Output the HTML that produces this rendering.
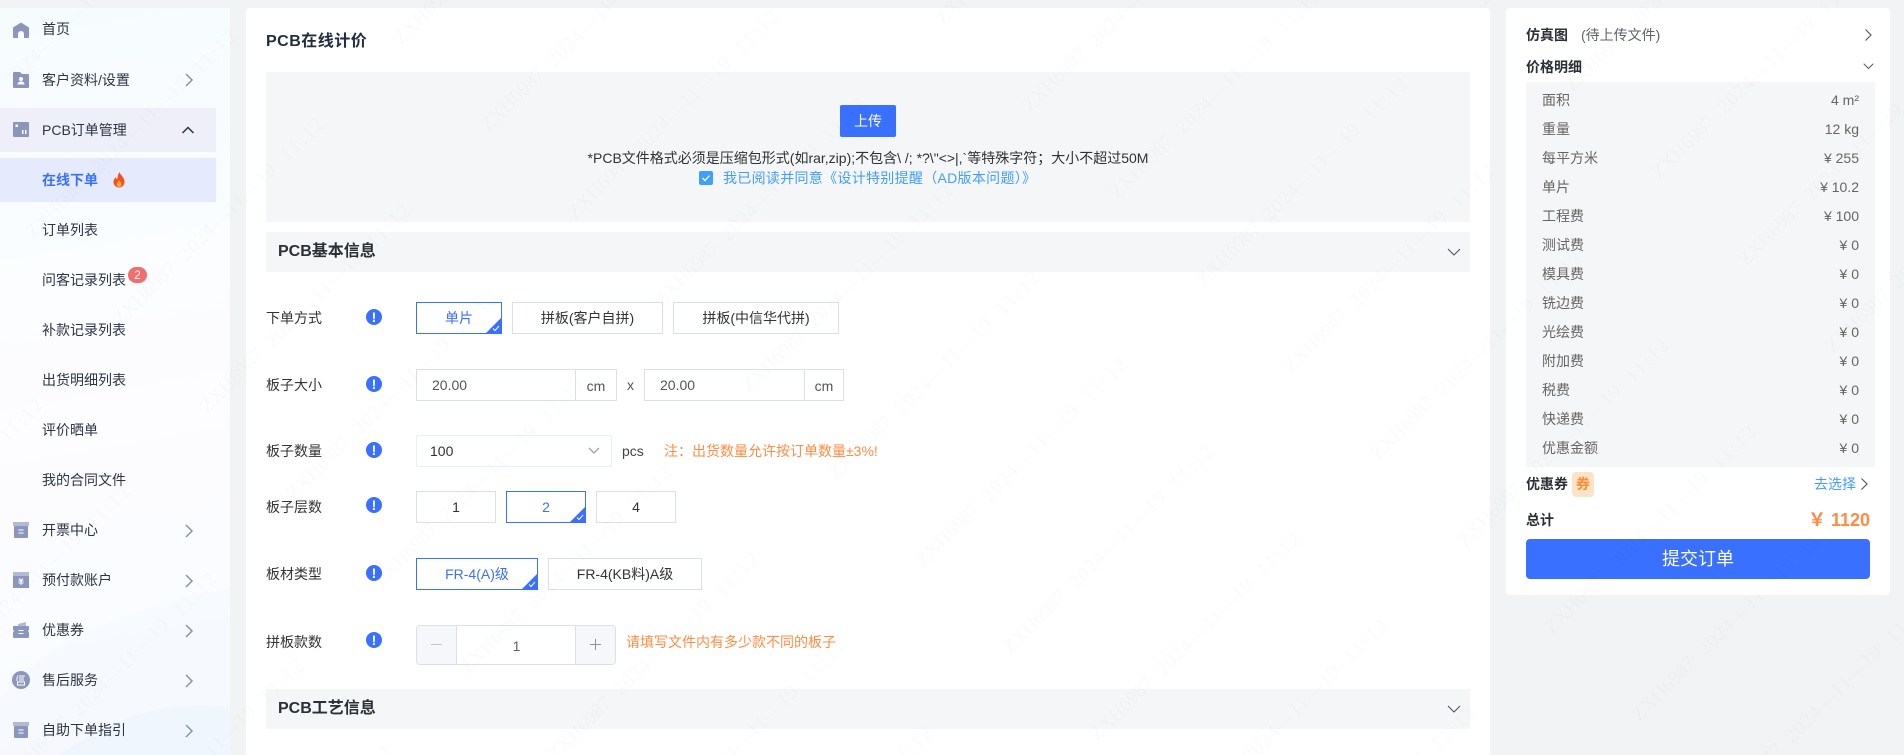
<!DOCTYPE html>
<html lang="zh-CN"><head><meta charset="utf-8"><title>PCB在线计价</title>
<style>
*{box-sizing:border-box;margin:0;padding:0}
html,body{width:1904px;height:755px;overflow:hidden;background:#f2f3f5}
body{position:relative;font-family:"Liberation Sans","Noto Sans CJK SC",sans-serif;font-size:14px;color:#303133}
.a{position:absolute;white-space:nowrap}
#side{position:absolute;left:0;top:8px;width:230px;height:747px;overflow:hidden;background:linear-gradient(170deg,#f6fcfe 0,#fbfdff 35%,#fdfcff 55%,#fafcff 80%,#f7fafe 100%)}
.m{position:absolute;left:42px;height:20px;line-height:20px;font-size:14px;color:#2c3444;white-space:nowrap}
.ic{position:absolute;left:13px;width:16px;height:16px}
.ch{position:absolute;left:183px;width:12px;height:14px}
.panel{position:absolute;background:#fff;border-radius:4px}
.sec{position:absolute;left:266px;width:1204px;height:40px;background:#f5f6f8;font-weight:700;font-size:16px;line-height:40px;padding-left:12px;color:#2b2f36}
.lb{position:absolute;left:266px;height:20px;line-height:20px;color:#333}
.inf{position:absolute;left:366px;width:16px;height:16px;border-radius:50%;background:#3a70ff;color:#fff;font-size:14px;font-weight:700;line-height:16px;text-align:center}
.op{position:absolute;height:32px;border:1px solid #dcdfe6;background:#fff;line-height:30px;text-align:center;font-size:14px;color:#333;overflow:hidden}
.on{border-color:#3a70ff;color:#3a70ff}
.on:after{content:"";position:absolute;right:0;bottom:0;border-style:solid;border-width:0 0 15px 15px;border-color:transparent transparent #3a70ff transparent}
.on svg{position:absolute;right:1px;bottom:1px;width:8px;height:7px;z-index:1}
.bx{position:absolute;border:1px solid #dcdfe6;background:#fff;line-height:30px;height:32px}
.or{color:#ff8c42;font-size:14px}
.pl{position:absolute;left:1542px;height:20px;line-height:20px;color:#666;font-size:14px}
.pv{position:absolute;right:45px;height:20px;line-height:20px;color:#666;font-size:14px;white-space:nowrap}
.b{font-weight:700;color:#2b2f36}
</style></head><body>

<div id="side">
<div class="a" style="left:0;top:100px;width:216px;height:44px;background:#eeeff9"></div>
<div class="a" style="left:0;top:150px;width:216px;height:44px;background:#e5ebfd"></div>
<svg class="a" style="left:0;top:540px" width="230" height="207" viewBox="0 0 230 207"><path d="M0 150C50 90 130 60 230 40V207H0Z" fill="#f0f5fc" opacity=".25"/><path d="M60 207C110 170 170 150 230 160V207Z" fill="#e9f3fd" opacity=".4"/></svg>
</div>

<!-- sidebar -->
<svg class="ic" style="top:22px" viewBox="0 0 16 16"><path d="M0 5.500 8 .5l8 5V15a1 1 0 0 1-1 1H1a1 1 0 0 1-1-1Z" fill="#8c96bd"/><path d="M5 16v-4a3 3 0 0 1 6 0v4Z" fill="#fff"/></svg>
<div class="m" style="top:19px">首页</div>
<svg class="ic" style="top:72px" viewBox="0 0 16 16"><path d="M0 1a1 1 0 0 1 1-1h6l2 2h6a1 1 0 0 1 1 1v12a1 1 0 0 1-1 1H1a1 1 0 0 1-1-1Z" fill="#8c96bd"/><circle cx="8" cy="7" r="2" fill="#fff"/><path d="M4.500 12.500c0-2 1.500-3 3.500-3s3.500 1 3.500 3Z" fill="#fff"/></svg>
<div class="m" style="top:70px">客户资料/设置</div>
<svg class="ic" style="top:122px" viewBox="0 0 16 16"><rect width="16" height="15" rx="1" fill="#8c96bd"/><rect x="2.500" y="2.500" width="2.500" height="2.500" fill="#fff"/><rect x="9" y="8" width="1.500" height="4" fill="#fff"/><rect x="12" y="8" width="1.500" height="4" fill="#fff"/></svg>
<div class="m" style="top:120px">PCB订单管理</div>
<div class="m" style="top:170px;color:#3a70ff;font-weight:700">在线下单</div>
<svg class="a" style="left:113px;top:172px" width="12" height="16" viewBox="0 0 12 16"><path d="M6.500 0C7 3 11.500 5 11.500 10A5.500 5.500 0 0 1 .5 10C.5 7.500 2 6.300 2.800 5c.2 1.300.8 2 1.500 2.300C4.500 4.500 5 2 6.500 0Z" fill="#f4511e"/><path d="M6 8c.4 1.500 2.500 2 2.500 4.200A2.500 2.500 0 0 1 3.500 12.500C3.500 11 5.500 10 6 8Z" fill="#ffab40"/></svg>
<div class="m" style="top:220px">订单列表</div>
<div class="m" style="top:270px">问客记录列表</div>
<div class="a" style="left:128px;top:267px;width:19px;height:16px;border-radius:9px;background:#f56c6c;color:#fff;font-size:12px;line-height:16px;text-align:center">2</div>
<div class="m" style="top:320px">补款记录列表</div>
<div class="m" style="top:370px">出货明细列表</div>
<div class="m" style="top:420px">评价晒单</div>
<div class="m" style="top:470px">我的合同文件</div>
<svg class="ic" style="top:522px" viewBox="0 0 16 16"><rect x="0" y="0" width="16" height="4" fill="#b3bad3"/><rect x="1" y="4" width="14" height="12" rx="1" fill="#8c96bd"/><path d="M5.500 7.500h5v1h-5Zm0 3h5v1h-5Z" fill="#fff"/></svg>
<div class="m" style="top:520px">开票中心</div>
<svg class="ic" style="top:572px" viewBox="0 0 16 16"><rect x="0" y="0" width="16" height="4.500" fill="#b3bad3"/><rect y="4" width="16" height="12" fill="#8c96bd"/><path d="M6 6.500l2 2 2-2M5.500 9h5M5.500 11h5M8 8.500V13" stroke="#fff" fill="none"/></svg>
<div class="m" style="top:570px">预付款账户</div>
<svg class="ic" style="top:622px" viewBox="0 0 16 16"><path d="M5 2 13 0v4H5Z" fill="#b3bad3"/><path d="M1 4h14a1 1 0 0 1 1 1v2.500a2 2 0 0 0 0 3V15a1 1 0 0 1-1 1H1a1 1 0 0 1-1-1v-4.500a2 2 0 0 0 0-3V5a1 1 0 0 1 1-1Z" fill="#8c96bd"/><path d="M5.500 8h5v1h-5Zm0 3h5v1h-5Z" fill="#fff"/></svg>
<div class="m" style="top:620px">优惠券</div>
<svg class="a" style="left:12px;top:671px" width="18" height="18" viewBox="0 0 18 18"><circle cx="9" cy="9" r="9" fill="#8c96bd"/><path d="M6 4.500 5 7v3M7 5h6M7 7h5M7 9h5M5.500 11h7v3h-7Z" stroke="#fff" fill="none"/></svg>
<div class="m" style="top:670px">售后服务</div>
<svg class="ic" style="top:722px" viewBox="0 0 16 16"><rect x="0" y="0" width="16" height="4" fill="#b3bad3"/><rect x="1" y="4" width="14" height="12" rx="1" fill="#8c96bd"/><path d="M5.500 7.500h5v1h-5Zm0 3h5v1h-5Z" fill="#fff"/></svg>
<div class="m" style="top:720px">自助下单指引</div>
<svg class="ch" style="top:73px" viewBox="0 0 12 14"><path d="M3 1l6 6-6 6" fill="none" stroke="#8a93a8" stroke-width="1.500"/></svg>
<svg class="a" style="left:181px;top:124px" width="14" height="12" viewBox="0 0 14 12"><path d="M1.500 9 7 3.500 12.500 9" fill="none" stroke="#2c3444" stroke-width="1.500"/></svg>
<svg class="ch" style="top:524px" viewBox="0 0 12 14"><path d="M3 1l6 6-6 6" fill="none" stroke="#8a93a8" stroke-width="1.500"/></svg>
<svg class="ch" style="top:574px" viewBox="0 0 12 14"><path d="M3 1l6 6-6 6" fill="none" stroke="#8a93a8" stroke-width="1.500"/></svg>
<svg class="ch" style="top:624px" viewBox="0 0 12 14"><path d="M3 1l6 6-6 6" fill="none" stroke="#8a93a8" stroke-width="1.500"/></svg>
<svg class="ch" style="top:674px" viewBox="0 0 12 14"><path d="M3 1l6 6-6 6" fill="none" stroke="#8a93a8" stroke-width="1.500"/></svg>
<svg class="ch" style="top:724px" viewBox="0 0 12 14"><path d="M3 1l6 6-6 6" fill="none" stroke="#8a93a8" stroke-width="1.500"/></svg>

<!-- main -->
<div class="panel" style="left:246px;top:8px;width:1244px;height:747px;border-radius:4px 4px 0 0"></div>
<div class="a" style="left:266px;top:28px;height:24px;line-height:24px;font-size:16px;font-weight:700;color:#1f2d3d;letter-spacing:.5px;margin-top:2px">PCB在线计价</div>
<div class="a" style="left:266px;top:72px;width:1204px;height:150px;background:#f5f6f8"></div>
<div class="a" style="left:840px;top:105px;width:56px;height:32px;border-radius:2px;background:#3a70ff;color:#fff;line-height:32px;text-align:center">上传</div>
<div class="a" style="left:266px;width:1204px;top:148px;height:20px;line-height:20px;text-align:center;color:#303133">*PCB文件格式必须是压缩包形式(如rar,zip);不包含\ /; *?\"&lt;&gt;|,`等特殊字符；大小不超过50M</div>
<div class="a" style="left:699px;top:171px;width:14px;height:14px;border-radius:2px;background:#409eff"></div>
<svg class="a" style="left:699px;top:171px" width="14" height="14" viewBox="0 0 14 14"><path d="M3.500 7 6 9.500 10.500 4.500" fill="none" stroke="#fff" stroke-width="1.300"/></svg>
<div class="a" style="left:723px;top:168px;height:20px;line-height:20px;color:#409eff;letter-spacing:.3px">我已阅读并同意《设计特别提醒（AD版本问题）》</div>

<div class="sec" style="top:232px">PCB基本信息</div>
<svg class="a" style="left:1447px;top:248px" width="14" height="8" viewBox="0 0 14 8"><path d="M1 1l6 6 6-6" fill="none" stroke="#4a5568" stroke-width="1.100"/></svg>

<div class="lb" style="top:308px">下单方式</div><div class="inf" style="top:309px">!</div>
<div class="op on" style="left:416px;top:302px;width:86px">单片<svg viewBox="0 0 8 7"><path d="M1 3.500 3 5.500 7 1" fill="none" stroke="#fff"/></svg></div>
<div class="op" style="left:512px;top:302px;width:151px">拼板(客户自拼)</div>
<div class="op" style="left:673px;top:302px;width:166px">拼板(中信华代拼)</div>

<div class="lb" style="top:375px">板子大小</div><div class="inf" style="top:376px">!</div>
<div class="bx" style="left:416px;top:369px;width:160px;padding-left:15px;color:#555">20.00</div>
<div class="bx" style="left:575px;top:369px;width:42px;text-align:center;color:#555;line-height:32px">cm</div>
<div class="a" style="left:627px;top:375px;line-height:20px;color:#555">x</div>
<div class="bx" style="left:644px;top:369px;width:161px;padding-left:15px;color:#555">20.00</div>
<div class="bx" style="left:804px;top:369px;width:40px;text-align:center;color:#555;line-height:32px">cm</div>

<div class="lb" style="top:441px">板子数量</div><div class="inf" style="top:442px">!</div>
<div class="bx" style="left:416px;top:435px;width:196px;padding-left:13px;border-color:#ebeef5;border-radius:2px;color:#303133">100</div>
<svg class="a" style="left:588px;top:447px" width="12" height="8" viewBox="0 0 12 8"><path d="M1 1l5 5 5-5" fill="none" stroke="#9aa3b2" stroke-width="1.300"/></svg>
<div class="a" style="left:622px;top:441px;line-height:20px;color:#444">pcs</div>
<div class="a or" style="left:664px;top:441px;line-height:20px">注：出货数量允许按订单数量±3%!</div>

<div class="lb" style="top:497px">板子层数</div><div class="inf" style="top:497px">!</div>
<div class="op" style="left:416px;top:491px;width:80px">1</div>
<div class="op on" style="left:506px;top:491px;width:80px">2<svg viewBox="0 0 8 7"><path d="M1 3.500 3 5.500 7 1" fill="none" stroke="#fff"/></svg></div>
<div class="op" style="left:596px;top:491px;width:80px">4</div>

<div class="lb" style="top:564px">板材类型</div><div class="inf" style="top:565px">!</div>
<div class="op on" style="left:416px;top:558px;width:122px">FR-4(A)级<svg viewBox="0 0 8 7"><path d="M1 3.500 3 5.500 7 1" fill="none" stroke="#fff"/></svg></div>
<div class="op" style="left:548px;top:558px;width:154px">FR-4(KB料)A级</div>

<div class="lb" style="top:632px">拼板款数</div><div class="inf" style="top:632px">!</div>
<div class="a" style="left:416px;top:625px;width:200px;height:40px;border:1px solid #dcdfe6;border-radius:4px;background:#fff;overflow:hidden">
<div class="a" style="left:0;top:0;width:40px;height:38px;background:#f5f7fa;border-right:1px solid #dcdfe6"><svg class="a" style="left:14px;top:13px" width="11" height="11" viewBox="0 0 11 11"><path d="M0 5.500h11" stroke="#c0c4cc"/></svg></div>
<div class="a" style="left:40px;width:119px;top:0;height:38px;line-height:40px;text-align:center;color:#606266">1</div>
<div class="a" style="right:0;top:0;width:40px;height:38px;background:#f5f7fa;border-left:1px solid #dcdfe6"><svg class="a" style="left:14px;top:13px" width="11" height="11" viewBox="0 0 11 11"><path d="M0 5.500h11M5.500 0v11" stroke="#909399"/></svg></div>
</div>
<div class="a or" style="left:626px;top:632px;line-height:20px">请填写文件内有多少款不同的板子</div>

<div class="sec" style="top:689px">PCB工艺信息</div>
<svg class="a" style="left:1447px;top:705px" width="14" height="8" viewBox="0 0 14 8"><path d="M1 1l6 6 6-6" fill="none" stroke="#4a5568" stroke-width="1.100"/></svg>

<!-- right -->
<div class="panel" style="left:1506px;top:8px;width:384px;height:587px"></div>
<div class="a b" style="left:1526px;top:25px;line-height:20px">仿真图</div>
<div class="a" style="left:1581px;top:25px;line-height:20px;color:#606266">(待上传文件)</div>
<svg class="a" style="left:1864px;top:28px" width="9" height="14" viewBox="0 0 9 14"><path d="M1.500 1.500 7 7l-5.500 5.500" fill="none" stroke="#555" stroke-width="1.100"/></svg>
<div class="a b" style="left:1526px;top:57px;line-height:20px">价格明细</div>
<svg class="a" style="left:1863px;top:63px" width="11" height="7" viewBox="0 0 11 7"><path d="M.7.7l4.800 4.800L10.300.7" fill="none" stroke="#555" stroke-width="1"/></svg>
<div class="a" style="left:1526px;top:82px;width:349px;height:385px;background:#f5f6f8"></div>

<div class="pl" style="top:90px">面积</div><div class="pv" style="top:90px">4 m²</div>
<div class="pl" style="top:119px">重量</div><div class="pv" style="top:119px">12 kg</div>
<div class="pl" style="top:148px">每平方米</div><div class="pv" style="top:148px">¥ 255</div>
<div class="pl" style="top:177px">单片</div><div class="pv" style="top:177px">¥ 10.2</div>
<div class="pl" style="top:206px">工程费</div><div class="pv" style="top:206px">¥ 100</div>
<div class="pl" style="top:235px">测试费</div><div class="pv" style="top:235px">¥ 0</div>
<div class="pl" style="top:264px">模具费</div><div class="pv" style="top:264px">¥ 0</div>
<div class="pl" style="top:293px">铣边费</div><div class="pv" style="top:293px">¥ 0</div>
<div class="pl" style="top:322px">光绘费</div><div class="pv" style="top:322px">¥ 0</div>
<div class="pl" style="top:351px">附加费</div><div class="pv" style="top:351px">¥ 0</div>
<div class="pl" style="top:380px">税费</div><div class="pv" style="top:380px">¥ 0</div>
<div class="pl" style="top:409px">快递费</div><div class="pv" style="top:409px">¥ 0</div>
<div class="pl" style="top:438px">优惠金额</div><div class="pv" style="top:438px">¥ 0</div>

<div class="a b" style="left:1526px;top:474px;line-height:20px">优惠券</div>
<div class="a" style="left:1572px;top:472px;width:22px;height:25px;border-radius:4px;background:#fde3c8;color:#ff8c2e;font-weight:700;line-height:25px;text-align:center">券</div>
<div class="a" style="left:1814px;top:474px;line-height:20px;color:#409eff">去选择</div>
<svg class="a" style="left:1860px;top:477px" width="9" height="14" viewBox="0 0 9 14"><path d="M1.500 1.500 7 7l-5.500 5.500" fill="none" stroke="#555" stroke-width="1.100"/></svg>
<div class="a b" style="left:1526px;top:510px;line-height:20px">总计</div>
<div class="a" style="right:34px;top:508px;line-height:24px;font-size:18px;font-weight:700;color:#ff8c42">￥ 1120</div>
<div class="a" style="left:1526px;top:539px;width:344px;height:40px;border-radius:4px;background:#3a70ff;color:#fff;font-size:18px;line-height:40px;text-align:center">提交订单</div>

<!-- watermark -->
<div class="a" style="left:0;top:0;width:1904px;height:755px;overflow:hidden;pointer-events:none">
<svg class="a" style="left:0;top:0" width="1904" height="755" viewBox="0 0 1904 755">
<defs>
<g id="t" font-family="Liberation Serif,serif" font-size="20" fill="#000" fill-opacity=".02" text-anchor="middle">
<text transform="translate(948 370) rotate(-45)" letter-spacing="1">2024—11—19</text>
<text transform="translate(1023 297) rotate(-45)" letter-spacing="2">11:12</text>
<text transform="translate(1146 171) rotate(-45)">ZXH6987</text>
</g>
<g id="c">
<use href="#t" x="-870" y="-870"/><use href="#t" x="-783" y="-783"/><use href="#t" x="-696" y="-696"/><use href="#t" x="-609" y="-609"/><use href="#t" x="-522" y="-522"/><use href="#t" x="-435" y="-435"/><use href="#t" x="-348" y="-348"/><use href="#t" x="-261" y="-261"/><use href="#t" x="-174" y="-174"/><use href="#t" x="-87" y="-87"/><use href="#t"/><use href="#t" x="87" y="87"/><use href="#t" x="174" y="174"/><use href="#t" x="261" y="261"/><use href="#t" x="348" y="348"/><use href="#t" x="435" y="435"/><use href="#t" x="522" y="522"/><use href="#t" x="609" y="609"/>
</g>
</defs>
<use href="#c" x="-1626" y="60"/><use href="#c" x="-1084" y="40"/><use href="#c" x="-542" y="20"/><use href="#c"/><use href="#c" x="542" y="-20"/><use href="#c" x="1084" y="-40"/>
</svg>
</div>
</body></html>
